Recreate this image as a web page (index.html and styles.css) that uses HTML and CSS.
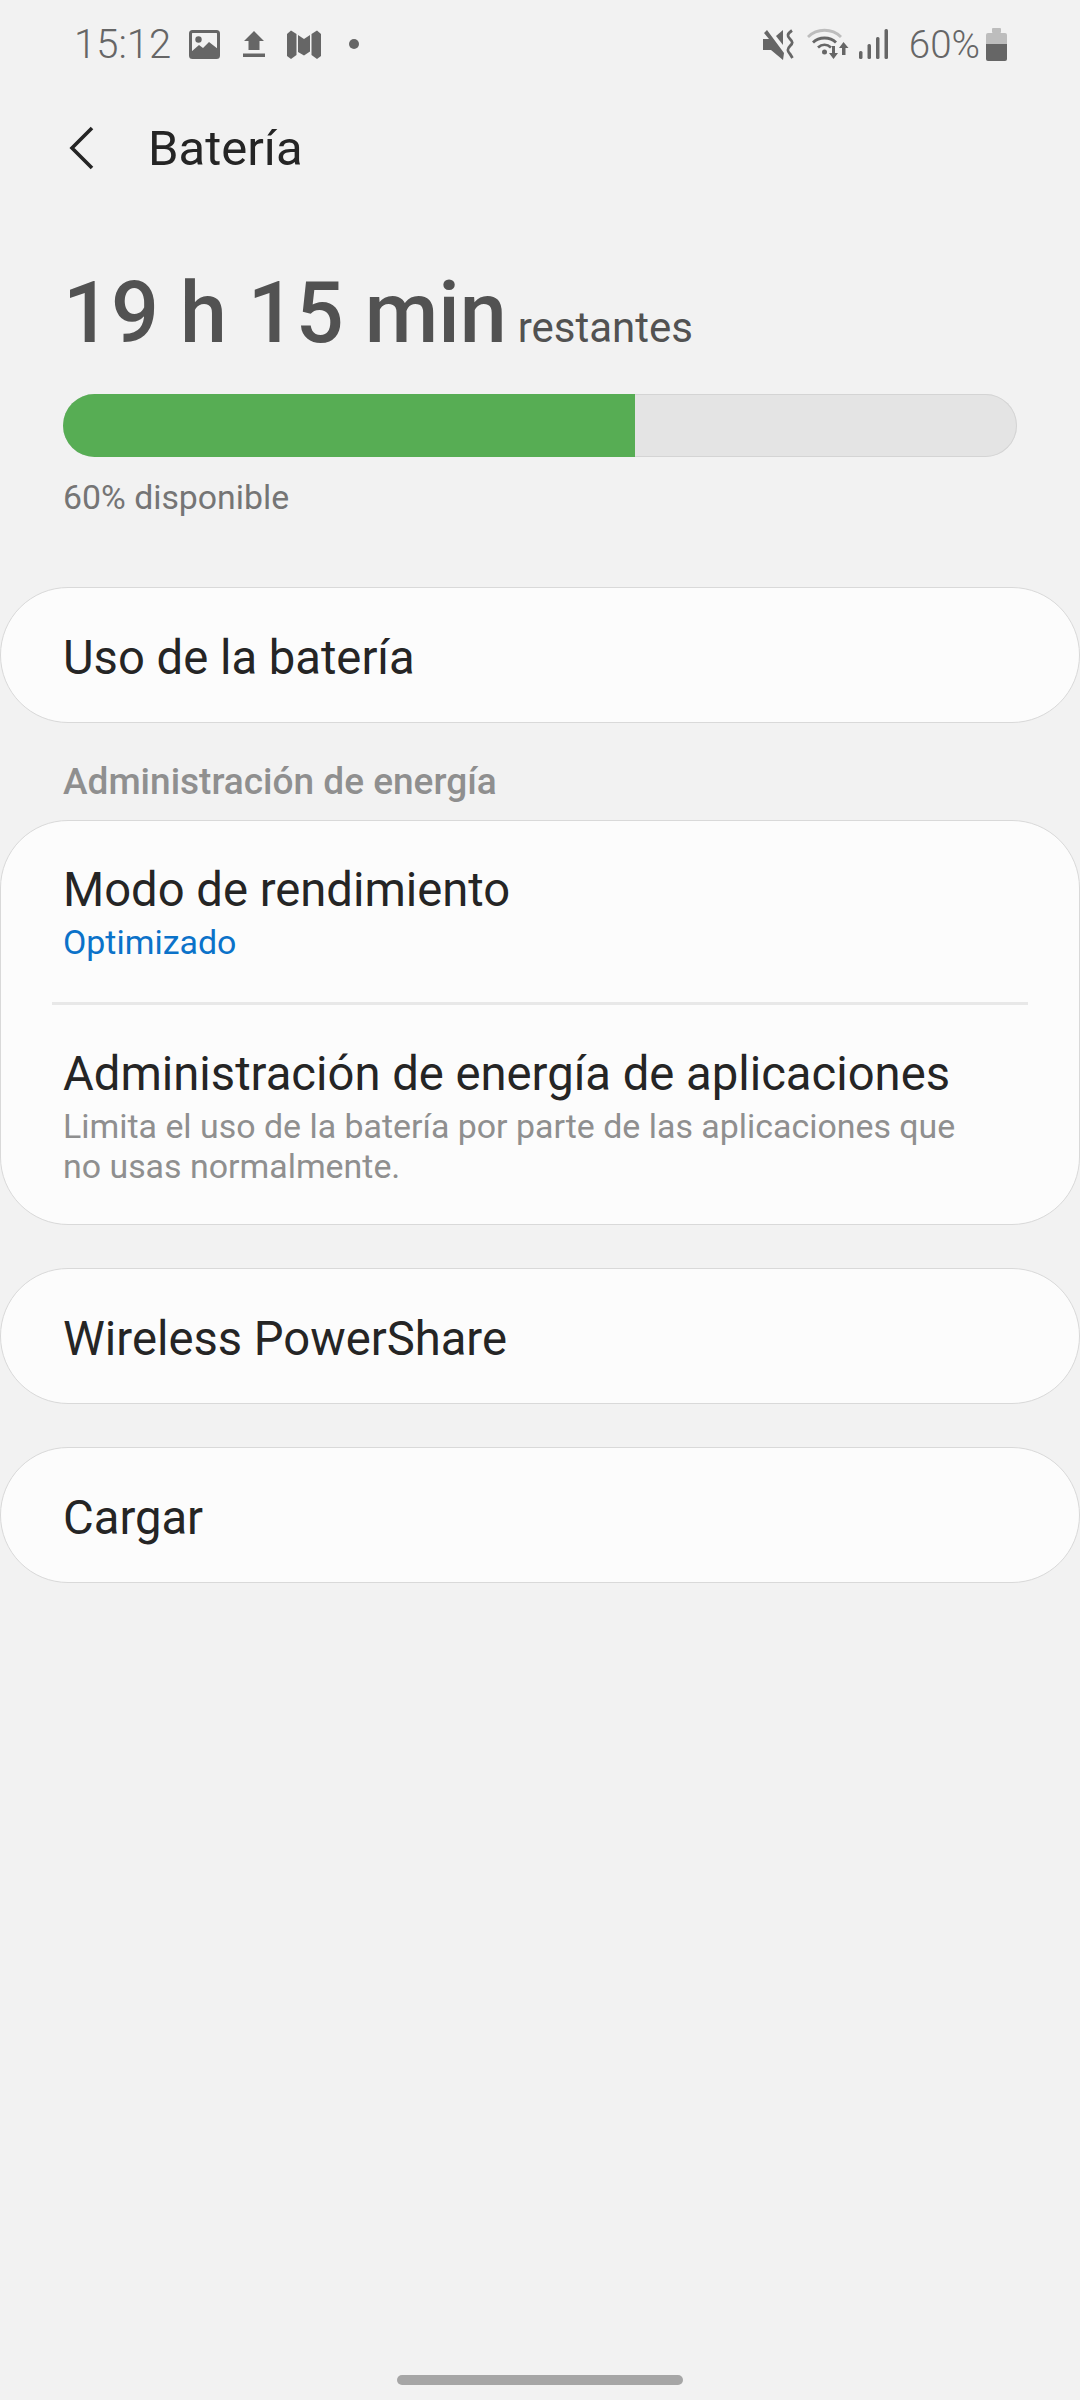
FILE: index.html
```html
<!DOCTYPE html>
<html lang="es">
<head>
    <meta charset="UTF-8">
    <meta name="viewport" content="width=device-width, initial-scale=1.0">
    <title>Batería</title>
    <link rel="stylesheet" href="styles.css">
</head>
<body>
    <div class="page">
        <div class="status-bar">
            <span class="clock">15:12</span>
            <svg class="ic-image" width="31" height="29" viewBox="0 0 31 29">
                <rect x="1.5" y="1.5" width="28" height="26" rx="2" fill="none" stroke="#666" stroke-width="3"/>
                <circle cx="9.5" cy="9.5" r="3.2" fill="#666"/>
                <path d="M2 25 L2 22 L10 15 L14 18 L20 12 L29 19 L29 27 L2 27 Z" fill="#666"/>
            </svg>
            <svg class="ic-upload" width="22" height="26" viewBox="0 0 22 26">
                <path d="M11 0 L21 10 L16.500 10 L16.500 19 L5.500 19 L5.500 10 L1 10 Z" fill="#666"/>
                <rect x="0" y="22.500" width="22" height="3.500" fill="#666"/>
            </svg>
            <svg class="ic-map" width="34" height="29" viewBox="0 0 34 29">
                <path d="M0 4 L4 0.500 L9.500 4 L9.500 25 L4 29 L0 26 Z" fill="#666"/>
                <path d="M11 5 L17 9 L23 5 L23 21.500 L17 25.500 L11 22 Z" fill="#666"/>
                <path d="M24.500 4 L30 0.500 L34 4 L34 26 L30 29 L24.500 25 Z" fill="#666"/>
            </svg>
            <span class="dot"></span>
            <span class="status-right">
                <svg class="ic-mute" width="32" height="31" viewBox="0 0 32 31">
                    <path d="M0 10 L6 10 L1 4 L4 1 L21 24 L20 31 L8 21 L0 21 Z" fill="#666"/>
                    <path d="M13 7 L20 1 L20 16 Z" fill="#666"/>
                    <path d="M29 1.500 C24 5 24 7 27 10 C30 13 30 14 27 17 C24 20 24 22 27 25 L29.500 29" fill="none" stroke="#666" stroke-width="2.800"/>
                </svg>
                <svg class="ic-wifi" width="42" height="32" viewBox="0 0 42 32">
                    <path d="M1 9 C10 0 25 0 34 9" fill="none" stroke="#bdbdbd" stroke-width="2.800"/>
                    <path d="M6 14.500 C12 8.500 23 8.500 29 14.500" fill="none" stroke="#666" stroke-width="2.800"/>
                    <path d="M11 19.500 C15 16 20 16 24 19.500" fill="none" stroke="#666" stroke-width="2.800"/>
                    <circle cx="17.500" cy="24" r="2.500" fill="#666"/>
                    <path d="M25 18 L28 18 L28 25 L31 25 L26.500 31 L22 25 L25 25 Z" fill="#666"/>
                    <path d="M36.500 14 L41.500 20 L38.500 20 L38.500 27 L35 27 L35 20 L32 20 Z" fill="#666"/>
                </svg>
                <svg class="ic-signal" width="29" height="30" viewBox="0 0 29 30">
                    <rect x="0" y="22" width="3.500" height="8" rx="1.500" fill="#666"/>
                    <rect x="8.500" y="15" width="3.500" height="15" rx="1.500" fill="#666"/>
                    <rect x="17" y="8" width="3.500" height="22" rx="1.500" fill="#666"/>
                    <rect x="25.500" y="0" width="3.500" height="30" rx="1.500" fill="#666"/>
                </svg>
                <span class="percent">60%</span>
                <svg class="ic-battery" width="21" height="33" viewBox="0 0 21 33">
                    <rect x="6" y="0" width="9" height="5" rx="1" fill="#bdbdbd"/>
                    <path d="M0 7 Q0 5 2 5 L19 5 Q21 5 21 7 L21 16 L0 16 Z" fill="#bdbdbd"/>
                    <path d="M0 16 L21 16 L21 31 Q21 33 19 33 L2 33 Q0 33 0 31 Z" fill="#666"/>
                </svg>
            </span>
        </div>

        <div class="app-bar">
            <svg class="back" width="26" height="44" viewBox="0 0 26 44">
                <path d="M23 2 L3 22 L23 42" fill="none" stroke="#252525" stroke-width="3.600"/>
            </svg>
            <h1>Batería</h1>
        </div>

        <div class="summary">
            <div class="remaining"><span class="hours">19 h 15 min</span> <span class="left">restantes</span></div>
            <div class="meter"><div class="meter-fill" style="width: 60%"></div></div>
            <div class="available">60% disponible</div>
        </div>

        <div class="card row">
            <div class="row-title">Uso de la batería</div>
        </div>

        <div class="section-label">Administración de energía</div>

        <div class="card">
            <div class="row two-line">
                <div class="row-title">Modo de rendimiento</div>
                <div class="row-sub blue">Optimizado</div>
            </div>
            <div class="divider"></div>
            <div class="row two-line last">
                <div class="row-title">Administración de energía de aplicaciones</div>
                <div class="row-sub">Limita el uso de la batería por parte de las aplicaciones que<br>no usas normalmente.</div>
            </div>
        </div>

        <div class="card row spaced">
            <div class="row-title">Wireless PowerShare</div>
        </div>

        <div class="card row spaced">
            <div class="row-title">Cargar</div>
        </div>

        <div class="home-bar"></div>
    </div>
</body>
</html>
```

FILE: styles.css
```css
body {
    margin: 0;
    background-color: #f2f2f2;
    font-family: Roboto, "Liberation Sans", sans-serif;
}
.page {
    height: 2400px;
    display: flex;
    flex-direction: column;
    box-sizing: border-box;
    overflow: hidden;
}

/* status bar */
.status-bar {
    height: 60px;
    margin-top: 14px;
    padding: 0 73px 0 74px;
    display: flex;
    align-items: center;
    color: #666;
}
.clock {
    font-size: 40px;
    font-weight: 300;
    margin-right: 18px;
}
.ic-upload {
    margin-left: 23px;
}
.ic-map {
    margin-left: 22px;
}
.dot {
    width: 10px;
    height: 10px;
    border-radius: 50%;
    background-color: #666;
    margin-left: 28px;
}
.status-right {
    margin-left: auto;
    display: flex;
    align-items: center;
}
.ic-wifi {
    margin-left: 12px;
}
.ic-signal {
    margin-left: 10px;
}
.percent {
    font-size: 38.500px;
    font-weight: 300;
    margin-left: 21px;
    margin-right: 6px;
}

/* title row */
.app-bar {
    display: flex;
    align-items: center;
    height: 60px;
    margin-top: 44px;
    padding-left: 69px;
}
.back {
    margin-right: 53px;
}
h1 {
    margin: 0;
    font-size: 49px;
    font-weight: 400;
    color: #252525;
}

/* remaining time + meter */
.summary {
    padding: 0 63px;
    margin-top: 94px;
}
.remaining {
    display: flex;
    align-items: baseline;
    gap: 11px;
    height: 84px;
    color: #525252;
}
.hours {
    font-size: 84.400px;
    font-weight: 500;
    line-height: 84px;
}
.left {
    font-size: 42px;
}
.meter {
    height: 63px;
    margin-top: 38px;
    background-color: #e4e4e4;
    box-shadow: inset 0 0 0 1px #d4d4d4;
    border-radius: 32px;
    overflow: hidden;
}
.meter-fill {
    height: 100%;
    background-color: #57ad54;
}
.available {
    margin-top: 22px;
    font-size: 33.800px;
    line-height: 38px;
    color: #757575;
}

/* cards */
.card {
    background-color: #fcfcfc;
    border: 1px solid #d9d9d9;
    border-radius: 68px;
    box-sizing: border-box;
    flex-shrink: 0;
}
.row {
    padding: 0 62px;
}
.card.row {
    height: 136px;
    display: flex;
    align-items: center;
    margin-top: 70px;
    padding-top: 6px;
}
.card.row.spaced {
    margin-top: 43px;
}
.row-title {
    font-size: 47.200px;
    line-height: 52px;
    color: #252525;
}
.two-line {
    padding-top: 43px;
    padding-bottom: 39px;
}
.two-line.last {
    padding-top: 43px;
    padding-bottom: 37px;
}
.row-sub {
    font-size: 33.900px;
    line-height: 40px;
    color: #8f8f8f;
    margin-top: 7px;
}
.row-sub.blue {
    color: #0b72c9;
}
.divider {
    height: 3px;
    margin: 0 51px;
    background-color: #e8e8e8;
}
.section-label {
    font-size: 37px;
    font-weight: 500;
    line-height: 40px;
    color: #8f8f8f;
    padding: 0 63px;
    margin-top: 39px;
    margin-bottom: 18px;
}

.home-bar {
    width: 286px;
    height: 10px;
    border-radius: 5px;
    background-color: #a6a6a6;
    margin: auto auto 15px;
}
```
